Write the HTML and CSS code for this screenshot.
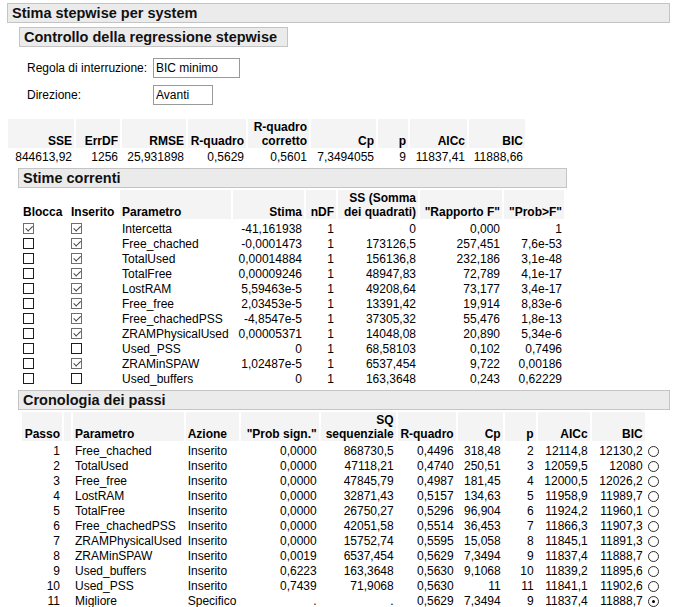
FILE: index.html
```html
<!DOCTYPE html>
<html lang="it">
<head>
<meta charset="utf-8">
<title>Stima stepwise per system</title>
<link rel="stylesheet" href="styles.css">
</head>
<body>
<div class="report">
  <div class="bar">Stima stepwise per system</div>

  <section class="box box-control">
    <div class="bar">Controllo della regressione stepwise</div>
    <div class="form">
      <span class="label">Regola di interruzione:</span><span class="field field-rule">BIC minimo</span>
      <span class="label">Direzione:</span><span class="field field-dir">Avanti</span>
    </div>
  </section>

  <table class="grid stats">
    <thead>
      <tr>
        <th class="w66">SSE</th><th class="w44">ErrDF</th><th class="w64">RMSE</th><th class="w58">R-quadro</th><th class="w61">R-quadro<br>corretto</th><th class="w65">Cp</th><th class="w30">p</th><th class="w57">AICc</th><th class="w56">BIC</th>
      </tr>
    </thead>
    <tbody>
      <tr><td>844613,92</td><td>1256</td><td>25,931898</td><td>0,5629</td><td>0,5601</td><td>7,3494055</td><td>9</td><td>11837,41</td><td>11888,66</td></tr>
    </tbody>
  </table>

  <section class="box">
    <div class="bar">Stime correnti</div>
    <table class="grid est">
      <thead>
        <tr>
          <th class="cbcol w46">Blocca</th><th class="cbcol w47">Inserito</th><th class="l w111">Parametro</th><th class="w71">Stima</th><th class="w30">nDF</th><th class="w80">SS (Somma<br>dei quadrati)</th><th class="w82">"Rapporto F"</th><th class="w60">"Prob&gt;F"</th>
        </tr>
      </thead>
      <tbody>
        <tr><td class="cbcol"><span class="cb on"></span></td><td class="cbcol"><span class="cb on"></span></td><td class="l">Intercetta</td><td>-41,161938</td><td>1</td><td>0</td><td>0,000</td><td>1</td></tr>
        <tr><td class="cbcol"><span class="cb"></span></td><td class="cbcol"><span class="cb on"></span></td><td class="l">Free_chached</td><td>-0,0001473</td><td>1</td><td>173126,5</td><td>257,451</td><td>7,6e-53</td></tr>
        <tr><td class="cbcol"><span class="cb"></span></td><td class="cbcol"><span class="cb on"></span></td><td class="l">TotalUsed</td><td>0,00014884</td><td>1</td><td>156136,8</td><td>232,186</td><td>3,1e-48</td></tr>
        <tr><td class="cbcol"><span class="cb"></span></td><td class="cbcol"><span class="cb on"></span></td><td class="l">TotalFree</td><td>0,00009246</td><td>1</td><td>48947,83</td><td>72,789</td><td>4,1e-17</td></tr>
        <tr><td class="cbcol"><span class="cb"></span></td><td class="cbcol"><span class="cb on"></span></td><td class="l">LostRAM</td><td>5,59463e-5</td><td>1</td><td>49208,64</td><td>73,177</td><td>3,4e-17</td></tr>
        <tr><td class="cbcol"><span class="cb"></span></td><td class="cbcol"><span class="cb on"></span></td><td class="l">Free_free</td><td>2,03453e-5</td><td>1</td><td>13391,42</td><td>19,914</td><td>8,83e-6</td></tr>
        <tr><td class="cbcol"><span class="cb"></span></td><td class="cbcol"><span class="cb on"></span></td><td class="l">Free_chachedPSS</td><td>-4,8547e-5</td><td>1</td><td>37305,32</td><td>55,476</td><td>1,8e-13</td></tr>
        <tr><td class="cbcol"><span class="cb"></span></td><td class="cbcol"><span class="cb on"></span></td><td class="l">ZRAMPhysicalUsed</td><td>0,00005371</td><td>1</td><td>14048,08</td><td>20,890</td><td>5,34e-6</td></tr>
        <tr><td class="cbcol"><span class="cb"></span></td><td class="cbcol"><span class="cb"></span></td><td class="l">Used_PSS</td><td>0</td><td>1</td><td>68,58103</td><td>0,102</td><td>0,7496</td></tr>
        <tr><td class="cbcol"><span class="cb"></span></td><td class="cbcol"><span class="cb on"></span></td><td class="l">ZRAMinSPAW</td><td>1,02487e-5</td><td>1</td><td>6537,454</td><td>9,722</td><td>0,00186</td></tr>
        <tr><td class="cbcol"><span class="cb"></span></td><td class="cbcol"><span class="cb"></span></td><td class="l">Used_buffers</td><td>0</td><td>1</td><td>163,3648</td><td>0,243</td><td>0,62229</td></tr>
      </tbody>
    </table>
  </section>

  <section class="box">
    <div class="bar">Cronologia dei passi</div>
    <table class="grid hist">
      <thead>
        <tr>
          <th class="w40">Passo</th><th class="w7"></th><th class="l w110">Parametro</th><th class="l w53">Azione</th><th class="w78">"Prob sign."</th><th class="w75">SQ<br>sequenziale</th><th class="w58">R-quadro</th><th class="w45">Cp</th><th class="w31">p</th><th class="w52">AICc</th><th class="w53">BIC</th><th class="plain w20"></th>
        </tr>
      </thead>
      <tbody>
        <tr><td>1</td><td></td><td class="l">Free_chached</td><td class="l">Inserito</td><td>0,0000</td><td>868730,5</td><td>0,4496</td><td>318,48</td><td>2</td><td>12114,8</td><td>12130,2</td><td class="rcol"><span class="radio"></span></td></tr>
        <tr><td>2</td><td></td><td class="l">TotalUsed</td><td class="l">Inserito</td><td>0,0000</td><td>47118,21</td><td>0,4740</td><td>250,51</td><td>3</td><td>12059,5</td><td>12080</td><td class="rcol"><span class="radio"></span></td></tr>
        <tr><td>3</td><td></td><td class="l">Free_free</td><td class="l">Inserito</td><td>0,0000</td><td>47845,79</td><td>0,4987</td><td>181,45</td><td>4</td><td>12000,5</td><td>12026,2</td><td class="rcol"><span class="radio"></span></td></tr>
        <tr><td>4</td><td></td><td class="l">LostRAM</td><td class="l">Inserito</td><td>0,0000</td><td>32871,43</td><td>0,5157</td><td>134,63</td><td>5</td><td>11958,9</td><td>11989,7</td><td class="rcol"><span class="radio"></span></td></tr>
        <tr><td>5</td><td></td><td class="l">TotalFree</td><td class="l">Inserito</td><td>0,0000</td><td>26750,27</td><td>0,5296</td><td>96,904</td><td>6</td><td>11924,2</td><td>11960,1</td><td class="rcol"><span class="radio"></span></td></tr>
        <tr><td>6</td><td></td><td class="l">Free_chachedPSS</td><td class="l">Inserito</td><td>0,0000</td><td>42051,58</td><td>0,5514</td><td>36,453</td><td>7</td><td>11866,3</td><td>11907,3</td><td class="rcol"><span class="radio"></span></td></tr>
        <tr><td>7</td><td></td><td class="l">ZRAMPhysicalUsed</td><td class="l">Inserito</td><td>0,0000</td><td>15752,74</td><td>0,5595</td><td>15,058</td><td>8</td><td>11845,1</td><td>11891,3</td><td class="rcol"><span class="radio"></span></td></tr>
        <tr><td>8</td><td></td><td class="l">ZRAMinSPAW</td><td class="l">Inserito</td><td>0,0019</td><td>6537,454</td><td>0,5629</td><td>7,3494</td><td>9</td><td>11837,4</td><td>11888,7</td><td class="rcol"><span class="radio"></span></td></tr>
        <tr><td>9</td><td></td><td class="l">Used_buffers</td><td class="l">Inserito</td><td>0,6223</td><td>163,3648</td><td>0,5630</td><td>9,1068</td><td>10</td><td>11839,2</td><td>11895,6</td><td class="rcol"><span class="radio"></span></td></tr>
        <tr><td>10</td><td></td><td class="l">Used_PSS</td><td class="l">Inserito</td><td>0,7439</td><td>71,9068</td><td>0,5630</td><td>11</td><td>11</td><td>11841,1</td><td>11902,6</td><td class="rcol"><span class="radio"></span></td></tr>
        <tr><td>11</td><td></td><td class="l">Migliore</td><td class="l">Specifico</td><td>.</td><td>.</td><td>0,5629</td><td>7,3494</td><td>9</td><td>11837,4</td><td>11888,7</td><td class="rcol"><span class="radio on"></span></td></tr>
      </tbody>
    </table>
  </section>
</div>
</body>
</html>
```

FILE: styles.css
```css
* { box-sizing: border-box; }

body {
  margin: 0;
  font: 12px/15px "Liberation Sans", Arial, sans-serif;
  color: #000;
  background: #fff;
}

.report {
  display: inline-flex;
  flex-direction: column;
  align-items: flex-start;
  margin: 3px 0 0 7px;
}

.bar {
  align-self: stretch;
  background: #ebebeb;
  border: 1px solid #c4c4c4;
  color: #111;
  font-weight: bold;
  font-size: 14.5px;
  line-height: 18px;
  padding: 0 10px 0 4px;
  white-space: nowrap;
}

.box {
  display: flex;
  flex-direction: column;
  align-items: flex-start;
  margin: 3px 0 0 11px;
}

.box-control {
  margin: 4px 0 0 12px;
}

/* form */
.form {
  display: grid;
  grid-template-columns: 126px auto;
  row-gap: 7px;
  align-items: center;
  margin: 11px 0 0 8px;
}

.field {
  justify-self: start;
  height: 20px;
  line-height: 18px;
  border: 1px solid #9a9a9a;
  padding: 0 2px;
  white-space: nowrap;
}

.field-rule { width: 87px; }
.field-dir { width: 60px; }

/* tables */
.grid {
  border-collapse: separate;
  border-spacing: 2px 0;
}

.grid th {
  font-weight: bold;
  line-height: 14px;
  padding: 1px 2px 0;
  vertical-align: bottom;
  text-align: right;
  white-space: nowrap;
  background: #f4f4f4;
  background-clip: padding-box;
  border-bottom: 3px solid transparent;
}

.grid td {
  padding: 0 2px;
  line-height: 15px;
  height: 15px;
  text-align: right;
  white-space: nowrap;
}

.grid .l { text-align: left; }

.grid th.plain,
.grid th.cbcol { background: none; }

.grid .cbcol {
  padding: 0;
  text-align: left;
}

.grid .rcol {
  padding: 0 0 0 1px;
  text-align: left;
}

.stats {
  margin: 14px 0 0 -1px;
}

.stats th { border-bottom-width: 2px; }

.est { margin: 2px 1px 0 3px; }
.hist { margin: 2px 1px 0 2px; }

.w7 { width: 7px; }
.w20 { width: 20px; }
.w30 { width: 30px; }
.w31 { width: 31px; }
.w40 { width: 40px; }
.w44 { width: 44px; }
.w45 { width: 45px; }
.w46 { width: 46px; }
.w47 { width: 47px; }
.w52 { width: 52px; }
.w53 { width: 53px; }
.w56 { width: 56px; }
.w57 { width: 57px; }
.w58 { width: 58px; }
.w60 { width: 60px; }
.w61 { width: 61px; }
.w64 { width: 64px; }
.w65 { width: 65px; }
.w66 { width: 66px; }
.w71 { width: 71px; }
.w75 { width: 75px; }
.w78 { width: 78px; }
.w80 { width: 80px; }
.w82 { width: 82px; }
.w110 { width: 110px; }
.w111 { width: 111px; }

/* checkbox */
.cb {
  position: relative;
  display: inline-block;
  width: 11px;
  height: 11px;
  border: 1px solid #1e1e1e;
  vertical-align: -1px;
  background: #fff;
}

.cb.on { border-color: #6e6e6e; }

.cb.on::after {
  content: "";
  position: absolute;
  left: 1px;
  top: 1px;
  width: 6px;
  height: 3px;
  border-left: 1px solid #3c3c3c;
  border-bottom: 1px solid #3c3c3c;
  transform: rotate(-45deg) translate(0, 1px);
}

/* radio */
.radio {
  position: relative;
  display: inline-block;
  width: 11px;
  height: 11px;
  border: 1px solid #2a2a2a;
  border-radius: 50%;
  vertical-align: -2px;
  background: #fff;
}

.radio.on::after {
  content: "";
  position: absolute;
  left: 3px;
  top: 3px;
  width: 3px;
  height: 3px;
  border-radius: 50%;
  background: #000;
}
```
